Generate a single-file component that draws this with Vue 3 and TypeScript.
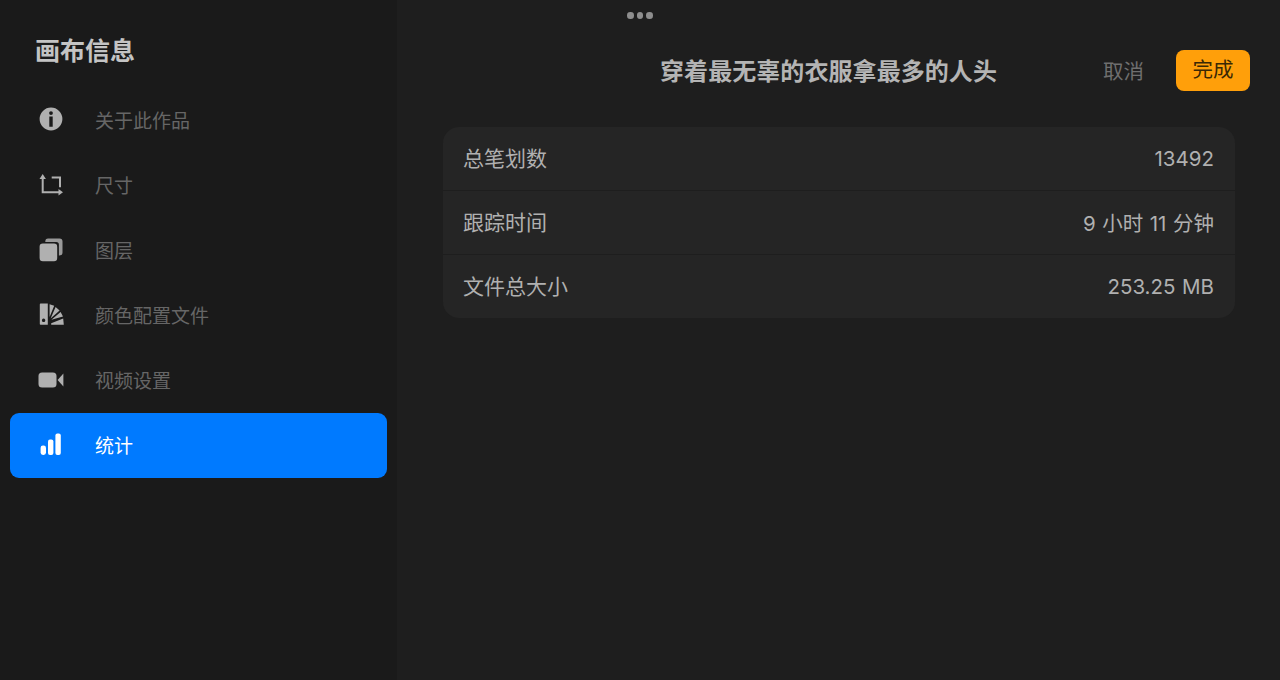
<script setup lang="ts">
interface NavItem {
  key: string;
  label: string;
}

const navItems: NavItem[] = [
  { key: 'info', label: '关于此作品' },
  { key: 'crop', label: '尺寸' },
  { key: 'layers', label: '图层' },
  { key: 'color', label: '颜色配置文件' },
  { key: 'video', label: '视频设置' },
  { key: 'stats', label: '统计' },
];

const stats = [
  { label: '总笔划数', value: '13492' },
  { label: '跟踪时间', value: '9 小时 11 分钟' },
  { label: '文件总大小', value: '253.25 MB' },
];
</script>

<template>
  <div class="page">
    <div class="grabber"><i></i><i></i><i></i></div>

    <aside class="sidebar">
      <h2 class="side-title">画布信息</h2>
      <nav class="nav">
        <div
          v-for="item in navItems"
          :key="item.key"
          class="nav-row"
          :class="{ active: item.key === 'stats' }"
        >
          <svg class="nav-icon" viewBox="0 0 28 28" width="28" height="28">
            <template v-if="item.key === 'info'">
              <path
                fill="currentColor"
                fill-rule="evenodd"
                d="M14 2.6a11.4 11.4 0 1 1 0 22.8a11.4 11.4 0 0 1 0-22.8zM14 6.2a1.9 1.9 0 1 0 0 3.8a1.9 1.9 0 0 0 0-3.8zM12.3 11.6v10.2h3.4V11.6z"
              />
            </template>
            <template v-else-if="item.key === 'crop'">
              <path
                fill="none"
                stroke="currentColor"
                stroke-width="2"
                d="M5.7 8v14.2H22M14.7 7.5H23V17.2"
              />
              <path fill="currentColor" d="M5.7 4L8.9 9H2.5zM26 22.2L21.5 25.4V19z" />
            </template>
            <template v-else-if="item.key === 'layers'">
              <path
                fill="currentColor"
                opacity="0.85"
                d="M11.5 3.4h11a3 3 0 0 1 3 3v11a3 3 0 0 1-3 3h-.6V9.6a2.6 2.6 0 0 0-2.6-2.6H8.3v-.6a3 3 0 0 1 3.2-3z"
              />
              <rect x="2.6" y="8.6" width="17.6" height="17.6" rx="3.2" fill="currentColor" />
            </template>
            <template v-else-if="item.key === 'color'">
              <path
                fill="currentColor"
                fill-rule="evenodd"
                d="M3.6 3.6h7.2v21.2H3.6a.8.8 0 0 1-.8-.8V4.4a.8.8 0 0 1 .8-.8zM6.6 18.6a1.7 1.7 0 1 0 .01 0z"
              />
              <path
                fill="currentColor"
                d="M12.6 4.2l4.6 1.6l-4.6 11.2zM18.6 7l4 3.4l-9 8zM23.6 12l2.4 4.4l-11.6 3.4zM26.2 18.4l.6 6.4H14.2v-1.6z"
              />
            </template>
            <template v-else-if="item.key === 'video'">
              <rect x="1.5" y="7.4" width="18" height="15.2" rx="3.6" fill="currentColor" />
              <path fill="currentColor" d="M20.6 15L26.4 8.6V21.4z" />
            </template>
            <template v-else>
              <rect x="3.6" y="15.5" width="5.4" height="9.5" rx="2.4" fill="currentColor" />
              <rect x="11" y="9.5" width="5.4" height="15.5" rx="2" fill="currentColor" />
              <rect x="18.4" y="3.4" width="5.4" height="21.6" rx="2" fill="currentColor" />
            </template>
          </svg>
          <span class="nav-label">{{ item.label }}</span>
        </div>
      </nav>
    </aside>

    <main class="main">
      <header class="topbar">
        <h1 class="art-title">穿着最无辜的衣服拿最多的人头</h1>
        <span class="cancel">取消</span>
        <span class="done">完成</span>
      </header>

      <section class="card">
        <div v-for="row in stats" :key="row.label" class="card-row">
          <span class="row-label">{{ row.label }}</span>
          <span class="row-value">{{ row.value }}</span>
        </div>
      </section>
    </main>
  </div>
</template>

<style>
html,
body {
  margin: 0;
  background: #1e1e1e;
}
</style>

<style scoped>
.page {
  position: relative;
  display: flex;
  width: 1280px;
  height: 680px;
  overflow: hidden;
  background: #1e1e1e;
  font-family: "Liberation Sans", "Noto Sans CJK SC", sans-serif;
}

.grabber {
  position: absolute;
  top: 12px;
  left: 627px;
  display: flex;
  gap: 3px;
}

.grabber i {
  width: 6.5px;
  height: 6.5px;
  border-radius: 50%;
  background: #8e8e8e;
}

.sidebar {
  flex: 0 0 397px;
  box-sizing: border-box;
  padding: 0 10px 0;
  background: #1a1a1a;
}

.side-title {
  margin: 0;
  padding: 36px 0 0 25px;
  height: 52px;
  font-size: 25px;
  line-height: 30px;
  font-weight: 700;
  color: #c4c4c4;
}

.nav {
  width: 377px;
}

.nav-row {
  display: flex;
  align-items: center;
  height: 65px;
  border-radius: 9px;
  color: #b0b0b0;
}

.nav-row.active {
  background: #007aff;
  color: #fff;
}

.nav-icon {
  flex: none;
  margin: 0 0 4px 27px;
}

.nav-label {
  margin: 0 0 3px 30px;
  font-size: 19px;
  color: #666;
}

.active .nav-label {
  color: #fff;
}

.main {
  flex: 1;
  min-width: 0;
  padding: 0 45px 0 46px;
}

.topbar {
  display: flex;
  align-items: center;
  height: 91px;
  padding-top: 50px;
  box-sizing: border-box;
  margin-right: -15px;
}

.art-title {
  margin: 2px 0 0 217px;
  font-size: 24px;
  line-height: 41px;
  font-weight: 700;
  letter-spacing: 0.07px;
  color: #b4b4b4;
  white-space: nowrap;
}

.cancel {
  margin: 0 0 2px 106px;
  font-size: 20.5px;
  color: #6f6f6f;
}

.done {
  margin-left: 32px;
  width: 74px;
  height: 41px;
  border-radius: 8px;
  background: #ff9f0a;
  color: #3a2805;
  font-size: 20.5px;
  line-height: 39px;
  text-align: center;
}

.card {
  margin-top: 36px;
  width: 792px;
  border-radius: 16px;
  background: #252525;
}

.card-row {
  display: flex;
  align-items: center;
  justify-content: space-between;
  box-sizing: border-box;
  height: 64px;
  padding: 0 21px 0 20px;
  font-size: 21px;
  color: #b0b0b0;
  border-bottom: 1px solid #1e1e1e;
}

.card-row:last-child {
  border-bottom: 0;
  height: 63px;
}

.row-label {
  margin-bottom: 4px;
}

.row-value {
  font-family: Inter, "Noto Sans CJK SC", sans-serif;
  font-size: 20.5px;
  word-spacing: 0.8px;
  margin-bottom: 1px;
}
</style>
